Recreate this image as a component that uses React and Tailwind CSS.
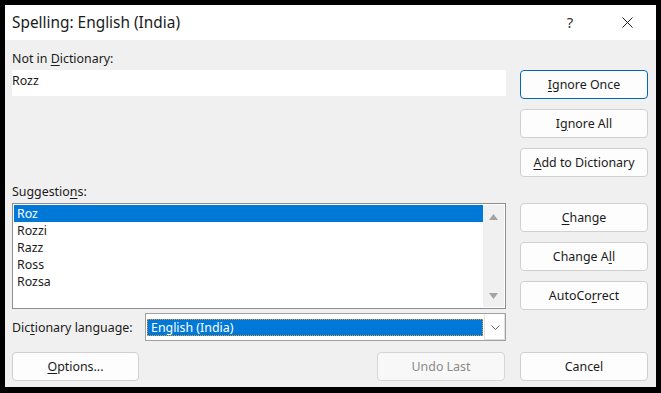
import React from "react";

const font = { fontFamily: '"Segoe UI", "Noto Sans", "Open Sans", sans-serif' };

function Btn({ children, focused, disabled }) {
  return (
    <button
      className={
        "h-[29px] w-full rounded-[4px] border pt-[1px] text-[12.4px] leading-none " +
        (focused
          ? "border-[#0067c0] bg-[#fdfdfd] text-[#1b1b1b]"
          : disabled
          ? "border-[#d6d6d6] bg-[#f8f8f8] text-[#8b8b8b]"
          : "border-[#d0d0d0] bg-[#fdfdfd] text-[#1b1b1b]")
      }
    >
      {children}
    </button>
  );
}

const suggestions = ["Roz", "Rozzi", "Razz", "Ross", "Rozsa"];

export default function App() {
  return (
    <div
      className="flex h-[393px] w-[661px] flex-col bg-black pb-[6px] pl-[5px] pr-[5px] pt-[5px] text-[#1b1b1b]"
      style={font}
    >
      <div className="flex h-full flex-col bg-[#f0f0f0]">
        {/* title bar */}
        <div className="flex h-[35px] items-center bg-white pl-[7px] pr-[6px]">
          <div className="flex-1 text-[15.4px]">Spelling: English (India)</div>
          <div className="mr-[14px] w-[40px] text-center text-[15px] text-[#333]">?</div>
          <div className="flex w-[46px] items-center justify-center">
            <svg width="11" height="11" viewBox="0 0 11 11">
              <path d="M0.5 0.5 L10.5 10.5 M10.5 0.5 L0.5 10.5" stroke="#1b1b1b" strokeWidth="1" />
            </svg>
          </div>
        </div>

        <div className="flex pl-[7px] pr-[8px]">
          {/* left column */}
          <div className="flex w-[494px] flex-col">
            <div className="h-[30px] pt-[11px] text-[12.4px] leading-[16px]">
              Not in <u className="underline-offset-2">D</u>ictionary:
            </div>
            <div className="h-[26px] bg-white pt-[3px] text-[12.4px] leading-[16px]">Rozz</div>
            <div className="h-[85px]" />
            <div className="h-[22px] pt-[3px] text-[12.4px] leading-[16px]">
              Suggestio<u className="underline-offset-2">n</u>s:
            </div>
            <div className="flex h-[106px] border border-[#8e8e8e] bg-white p-[1px]">
              <div className="flex-1 text-[12.4px]">
                {suggestions.map((s, i) => (
                  <div
                    key={s}
                    className={
                      "h-[17px] pl-[3px] leading-[18px] " +
                      (i === 0 ? "bg-[#0078d7] text-white" : "")
                    }
                  >
                    {s}
                  </div>
                ))}
              </div>
              <div className="flex w-[21px] flex-col items-center justify-between bg-[#f0f0f0] pb-[8px] pt-[9px]">
                <svg width="9" height="6" viewBox="0 0 9 6">
                  <path d="M4.5 0 L9 6 L0 6 Z" fill="#a3a3a3" />
                </svg>
                <svg width="9" height="6" viewBox="0 0 9 6">
                  <path d="M0 0 L9 0 L4.5 6 Z" fill="#a3a3a3" />
                </svg>
              </div>
            </div>
            <div className="mt-[4px] flex h-[28px] items-center">
              <div className="w-[133px] pt-[1px] text-[12.4px] leading-[16px]">
                Dic<u className="underline-offset-2">t</u>ionary language:
              </div>
              <div className="flex h-[28px] flex-1 border border-[#a0a0a0] bg-white">
                <div className="flex flex-1 items-center pl-[1px] pr-[1px]">
                  <div className="h-[17px] w-full border border-dotted border-[#e8972c] bg-[#0078d7] pl-[3px] text-[12.4px] leading-[16px] text-white">
                    English (India)
                  </div>
                </div>
                <div className="flex w-[21px] items-center justify-center border-l border-[#e4e4e4] bg-white shadow-[inset_-1px_-1px_0_#e0e0e0]">
                  <svg width="9" height="5" viewBox="0 0 9 5">
                    <path d="M0.5 0.5 L4.5 4.5 L8.5 0.5" stroke="#606060" strokeWidth="1" fill="none" />
                  </svg>
                </div>
              </div>
            </div>
          </div>

          {/* right column */}
          <div className="ml-[14px] flex w-[128px] flex-col pt-[30px]">
            <div className="flex flex-col gap-[10px]">
              <Btn focused>
                <u className="underline-offset-2">I</u>gnore Once
              </Btn>
              <Btn>
                I<u className="underline-offset-2">g</u>nore All
              </Btn>
              <Btn>
                <u className="underline-offset-2">A</u>dd to Dictionary
              </Btn>
            </div>
            <div className="mt-[26px] flex flex-col gap-[10px]">
              <Btn>
                <u className="underline-offset-2">C</u>hange
              </Btn>
              <Btn>
                Change A<u className="underline-offset-2">l</u>l
              </Btn>
              <Btn>
                AutoCo<u className="underline-offset-2">r</u>rect
              </Btn>
            </div>
          </div>
        </div>

        {/* bottom row */}
        <div className="mt-[11px] flex pl-[7px] pr-[8px]">
          <div className="w-[127px]">
            <Btn>
              <u className="underline-offset-2">O</u>ptions...
            </Btn>
          </div>
          <div className="ml-[238px] w-[128px]">
            <Btn disabled>Undo Last</Btn>
          </div>
          <div className="ml-[15px] w-[128px]">
            <Btn>Cancel</Btn>
          </div>
        </div>
      </div>
    </div>
  );
}
